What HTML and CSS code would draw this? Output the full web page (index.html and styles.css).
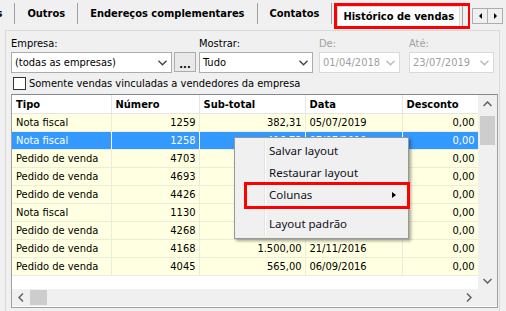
FILE: index.html
```html
<!DOCTYPE html>
<html lang="pt-BR">

<head>
  <meta charset="UTF-8" />
  <title>Histórico de vendas</title>
  <link rel="stylesheet" href="styles.css">
</head>

<body>
  <div class="tabbar">
    <div class="tab-clip">
      <div class="tab-strip">
        <div class="tab">Observações</div>
        <div class="tab">Outros</div>
        <div class="tab">Endereços complementares</div>
        <div class="tab">Contatos</div>
        <div class="tab-mark">
          <div class="tab active">Histórico de vendas</div>
          <span class="tab-sep"></span>
        </div>
      </div>
    </div>
    <div class="tab-scroll">
      <span class="arrow-btn"><i class="tri tri-left"></i></span>
      <span class="arrow-btn"><i class="tri tri-right"></i></span>
    </div>
  </div>

  <div class="panel">
    <div class="filters">
      <div class="field f-empresa">
        <label>Empresa:</label>
        <div class="combo-row">
          <div class="combo c-empresa">
            <span>(todas as empresas)</span>
            <svg class="chev" width="9" height="6" viewBox="0 0 9 6"><polyline points="0.5,0.8 4.5,4.8 8.5,0.8" /></svg>
          </div>
          <button class="dots">...</button>
        </div>
      </div>
      <div class="field f-mostrar">
        <label>Mostrar:</label>
        <div class="combo">
          <span>Tudo</span>
          <svg class="chev" width="9" height="6" viewBox="0 0 9 6"><polyline points="0.5,0.8 4.5,4.8 8.5,0.8" /></svg>
        </div>
      </div>
      <div class="field f-de disabled">
        <label>De:</label>
        <div class="combo">
          <span>01/04/2018</span>
          <svg class="chev" width="9" height="6" viewBox="0 0 9 6"><polyline points="0.5,0.8 4.5,4.8 8.5,0.8" /></svg>
        </div>
      </div>
      <div class="field f-ate disabled">
        <label>Até:</label>
        <div class="combo">
          <span>23/07/2019</span>
          <svg class="chev" width="9" height="6" viewBox="0 0 9 6"><polyline points="0.5,0.8 4.5,4.8 8.5,0.8" /></svg>
        </div>
      </div>
    </div>

    <label class="check"><span class="box"></span>Somente vendas vinculadas a vendedores da empresa</label>

    <div class="grid">
      <div class="grid-main">
        <div class="grid-table">
          <table>
            <colgroup>
              <col style="width: 99px">
              <col style="width: 88px">
              <col style="width: 106px">
              <col style="width: 97px">
              <col style="width: 76px">
            </colgroup>
            <thead>
              <tr>
                <th>Tipo</th>
                <th>Número</th>
                <th>Sub-total</th>
                <th>Data</th>
                <th>Desconto</th>
              </tr>
            </thead>
            <tbody>
              <tr><td>Nota fiscal</td><td class="num">1259</td><td class="num">382,31</td><td>05/07/2019</td><td class="num">0,00</td></tr>
              <tr class="selected"><td>Nota fiscal</td><td class="num">1258</td><td class="num">416,72</td><td>07/07/2019</td><td class="num">0,00</td></tr>
              <tr><td>Pedido de venda</td><td class="num">4703</td><td class="num">1.250,00</td><td>02/07/2019</td><td class="num">0,00</td></tr>
              <tr><td>Pedido de venda</td><td class="num">4693</td><td class="num">890,40</td><td>28/06/2019</td><td class="num">0,00</td></tr>
              <tr><td>Pedido de venda</td><td class="num">4426</td><td class="num">742,00</td><td>14/03/2019</td><td class="num">0,00</td></tr>
              <tr><td>Nota fiscal</td><td class="num">1130</td><td class="num">655,90</td><td>10/01/2019</td><td class="num">0,00</td></tr>
              <tr><td>Pedido de venda</td><td class="num">4268</td><td class="num">980,00</td><td>05/12/2016</td><td class="num">0,00</td></tr>
              <tr><td>Pedido de venda</td><td class="num">4168</td><td class="num">1.500,00</td><td>21/11/2016</td><td class="num">0,00</td></tr>
              <tr><td>Pedido de venda</td><td class="num">4045</td><td class="num">565,00</td><td>06/09/2016</td><td class="num">0,00</td></tr>
            </tbody>
          </table>
        </div>
        <div class="vscroll">
          <span class="sb-btn"><svg width="9" height="6" viewBox="0 0 9 6"><polyline points="0.5,5 4.5,1 8.5,5" /></svg></span>
          <span class="sb-track"><span class="sb-thumb"></span></span>
          <span class="sb-btn"><svg width="9" height="6" viewBox="0 0 9 6"><polyline points="0.5,1 4.5,5 8.5,1" /></svg></span>
        </div>
      </div>
      <div class="hscroll">
        <span class="sb-btn"><svg width="6" height="9" viewBox="0 0 6 9"><polyline points="5,0.5 1,4.5 5,8.5" /></svg></span>
        <span class="sb-track"><span class="sb-thumb"></span></span>
        <span class="sb-btn"><svg width="6" height="9" viewBox="0 0 6 9"><polyline points="1,0.5 5,4.5 1,8.5" /></svg></span>
        <span class="sb-corner"></span>
      </div>
    </div>
  </div>

  <div class="menu">
    <div class="menu-item">Salvar layout</div>
    <div class="menu-item">Restaurar layout</div>
    <div class="menu-item">Colunas<i class="sub-arrow"></i></div>
    <div class="menu-sep"></div>
    <div class="menu-item">Layout padrão</div>
    <div class="mark"></div>
  </div>
</body>

</html>
```

FILE: styles.css
```css
body {
  margin: 0;
  width: 506px;
  height: 311px;
  overflow: hidden;
  position: relative;
  background: #f0f0f0;
  font-family: 'DejaVu Sans Condensed', 'DejaVu Sans', sans-serif;
  font-size: 11px;
  color: #000;
}

/* tabs */

.tabbar {
  display: flex;
  height: 27px;
  padding-top: 3px;
}

.tab-clip {
  width: 470px;
  overflow: hidden;
}

.tab-strip {
  display: flex;
  align-items: flex-start;
  margin-left: -81px;
}

.tab {
  font-weight: bold;
  line-height: 21px;
  padding: 0 12px;
  border-right: 1px solid #a0a0a0;
  white-space: nowrap;
}

.tab-mark {
  display: flex;
  align-items: flex-start;
  margin-left: 2px;
  height: 20px;
  border: 3px solid #f00;
}

.tab.active {
  background: #fcfcfc;
  border: 1px solid #dcdcdc;
  border-bottom: none;
  line-height: 19px;
  padding: 0 5px;
}

.tab-sep {
  width: 1px;
  height: 20px;
  margin-left: 2px;
  margin-right: 5px;
  background: #a0a0a0;
}

.tab-scroll {
  display: flex;
  margin-left: auto;
  margin-right: 3px;
  margin-top: 5px;
}

.arrow-btn {
  width: 14px;
  height: 14px;
  border: 1px solid #adadad;
  background: #f0f0f0;
  display: flex;
  align-items: center;
  justify-content: center;
}

.arrow-btn + .arrow-btn {
  border-left: none;
}

.tri {
  width: 0;
  height: 0;
  border-top: 3px solid transparent;
  border-bottom: 3px solid transparent;
}

.tri-left {
  border-right: 3px solid #000;
}

.tri-right {
  border-left: 3px solid #000;
}

/* panel */

.panel {
  margin-left: 5px;
  width: 495px;
  height: 282px;
  border: 1px solid #d9d9d9;
  border-bottom: none;
  padding: 5px 0 0 5px;
  box-sizing: border-box;
}

.filters {
  display: flex;
}

.field label {
  display: block;
  height: 16px;
  line-height: 16px;
}

.f-mostrar {
  margin-left: 3px;
}

.f-de {
  margin-left: 6px;
}

.f-ate {
  margin-left: 9px;
}

.disabled label {
  color: #a0a0a0;
}

.combo-row {
  display: flex;
  gap: 2px;
}

.combo {
  height: 21px;
  box-sizing: border-box;
  background: #fff;
  border: 1px solid #acacac;
  display: flex;
  align-items: center;
  justify-content: space-between;
  padding: 0 4px 0 3px;
}

.c-empresa {
  width: 161px;
}

.f-mostrar .combo {
  width: 114px;
}

.f-de .combo {
  width: 81px;
}

.f-ate .combo {
  width: 85px;
}

.disabled .combo {
  border-color: #d9d9d9;
  color: #a0a0a0;
}

.chev {
  fill: none;
  stroke: #404040;
  stroke-width: 1.3;
}

.disabled .chev {
  stroke: #b8b8b8;
}

.dots {
  width: 22px;
  height: 20px;
  padding: 0;
  border: 1px solid #acacac;
  background: #e9e9e9;
  font-family: inherit;
  font-size: 11px;
  font-weight: bold;
  line-height: 20px;
  padding-top: 2px;
}

.check {
  display: flex;
  align-items: center;
  margin: 4px 0 0 2px;
  height: 13px;
}

.box {
  width: 13px;
  height: 13px;
  box-sizing: border-box;
  border: 1px solid #333;
  background: #fff;
  margin-right: 3px;
}

/* grid */

.grid {
  margin-top: 4px;
  width: 487px;
  height: 214px;
  box-sizing: border-box;
  border: 1px solid #a0a0a0;
  border-top-color: #828790;
  background: #fff;
  display: flex;
  flex-direction: column;
}

.grid-main {
  display: flex;
  height: 194px;
}

.grid-table {
  width: 466px;
  overflow: hidden;
}

table {
  border-collapse: collapse;
  table-layout: fixed;
  width: 466px;
}

th {
  height: 18px;
  padding: 0 4px;
  text-align: left;
  font-weight: bold;
  background: #fff;
  border-right: 1px solid #e5e5e5;
  border-bottom: 1px solid #e5e5e5;
}

td {
  height: 17px;
  padding: 0 4px;
  background: #ffffe1;
  border-right: 1px solid #ececd8;
  border-bottom: 1px solid #ececd8;
  white-space: nowrap;
  overflow: hidden;
}

td.num {
  text-align: right;
  padding-right: 3px;
}

tr.selected td {
  background: #3399ff;
  color: #fff;
  border-right-color: #fff;
}

.vscroll {
  width: 19px;
  background: #f0f0f0;
  display: flex;
  flex-direction: column;
}

.sb-btn {
  display: flex;
  align-items: center;
  justify-content: center;
  flex: none;
}

.vscroll .sb-btn {
  height: 17px;
}

.sb-btn svg {
  fill: none;
  stroke: #606060;
  stroke-width: 1.5;
}

.sb-track {
  flex: 1;
  display: flex;
}

.vscroll .sb-track {
  flex-direction: column;
  padding: 4px 2px 0 2px;
}

.vscroll .sb-thumb {
  height: 29px;
  background: #cdcdcd;
}

.hscroll {
  height: 17px;
  display: flex;
  background: #f0f0f0;
}

.hscroll .sb-btn {
  width: 18px;
}

.hscroll .sb-track {
  padding: 1px 0;
}

.hscroll .sb-thumb {
  width: 17px;
  background: #cdcdcd;
}

.sb-corner {
  width: 19px;
  background: #f0f0f0;
}

/* context menu */

.menu {
  position: absolute;
  left: 234px;
  top: 137px;
  width: 175px;
  box-sizing: border-box;
  padding: 2px 0 3px;
  background: #f0f0f0;
  border: 1px solid #979797;
  box-shadow: 2px 2px 3px rgba(0, 0, 0, 0.35);
  font-family: 'Noto Sans', sans-serif;
  font-size: 11.5px;
  color: #101020;
}

.menu::before {
  content: '';
  position: absolute;
  left: 29px;
  top: 2px;
  bottom: 2px;
  width: 1px;
  background: #e2e3e3;
  border-right: 1px solid #fff;
}

.menu-item {
  position: relative;
  height: 22px;
  line-height: 22px;
  padding-left: 34px;
}

.sub-arrow {
  position: absolute;
  right: 12px;
  top: 8px;
  border-top: 3.5px solid transparent;
  border-bottom: 3.5px solid transparent;
  border-left: 4px solid #000;
}

.menu-sep {
  height: 1px;
  margin: 2px 2px 3px 31px;
  background: #e0e0e0;
  border-bottom: 1px solid #fff;
}

.mark {
  position: absolute;
  left: 9px;
  top: 44px;
  width: 166px;
  height: 27px;
  box-sizing: border-box;
  border: 3px solid #f00;
}
```
